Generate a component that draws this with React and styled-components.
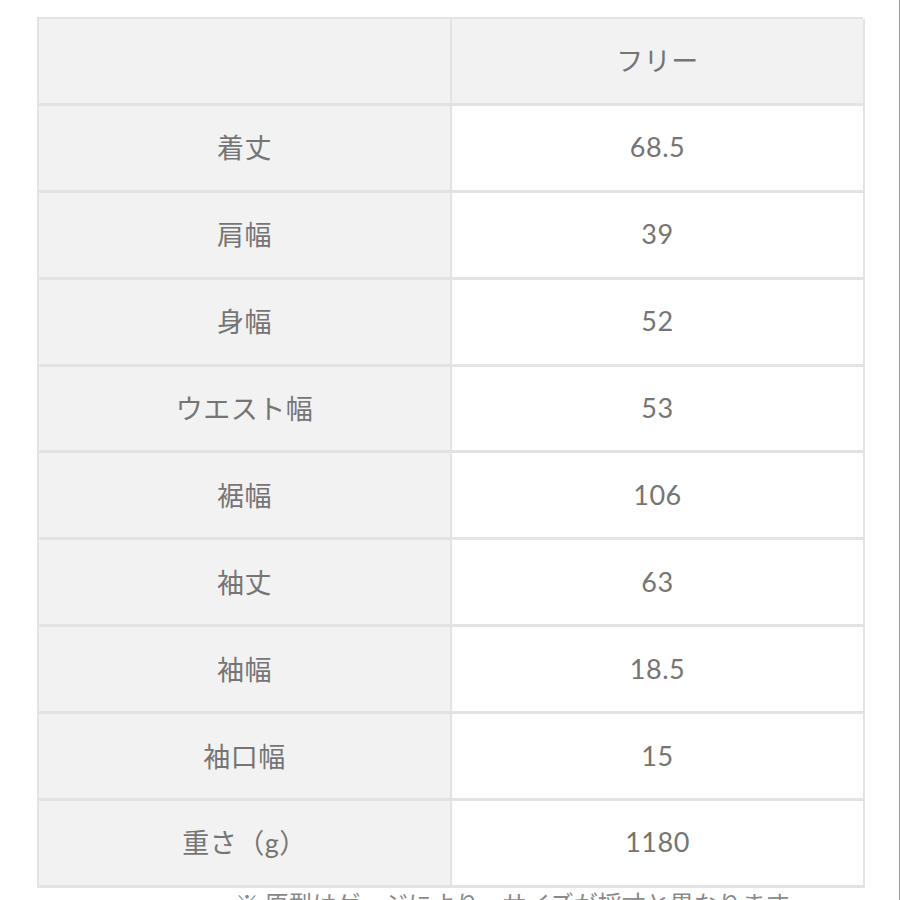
import React from "react";
import styled, { createGlobalStyle } from "styled-components";

const Global = createGlobalStyle`
  html, body { margin: 0; padding: 0; background: #fff; overflow: hidden; }
`;

const Page = styled.div`
  width: 900px;
  height: 900px;
  box-sizing: border-box;
  border-right: 1px solid #9a9a9a;
  padding: 17px 0 0 37px;
  overflow: hidden;
  font-family: Lato, "Noto Sans CJK JP", sans-serif;
  color: #757575;
`;

const Grid = styled.div`
  display: grid;
  width: 826px;
  grid-template-columns: 413px 413px;
  grid-auto-rows: 86.9px;
  box-sizing: border-box;
  border-top: 2px solid #e3e3e3;
  border-left: 2px solid #e3e3e3;
`;

const Cell = styled.div`
  display: flex;
  align-items: center;
  justify-content: center;
  box-sizing: border-box;
  border-right: 2px solid #e3e3e3;
  border-bottom: 3px solid #e3e3e3;
  background: ${(p) => (p.$shaded ? "#f2f2f2" : "#ffffff")};
  font-size: 27px;
  letter-spacing: 0.5px;
  padding-bottom: 2px;
`;

const Note = styled.div`
  margin: 0 0 0 198px;
  font-size: 24px;
  line-height: 30px;
  color: #8a8a8a;
  white-space: nowrap;
  font-family: "Noto Sans CJK JP", sans-serif;
`;

const rows = [
  ["着丈", "68.5"],
  ["肩幅", "39"],
  ["身幅", "52"],
  ["ウエスト幅", "53"],
  ["裾幅", "106"],
  ["袖丈", "63"],
  ["袖幅", "18.5"],
  ["袖口幅", "15"],
  ["重さ（g）", "1180"],
];

export default function App() {
  return (
    <>
      <Global />
      <Page>
        <Grid>
          <Cell $shaded />
          <Cell $shaded>フリー</Cell>
          {rows.map(([k, v]) => (
            <React.Fragment key={k}>
              <Cell $shaded>{k}</Cell>
              <Cell>{v}</Cell>
            </React.Fragment>
          ))}
        </Grid>
        <Note>※ 原型はゲージにより、サイズが採寸と異なります</Note>
      </Page>
    </>
  );
}
